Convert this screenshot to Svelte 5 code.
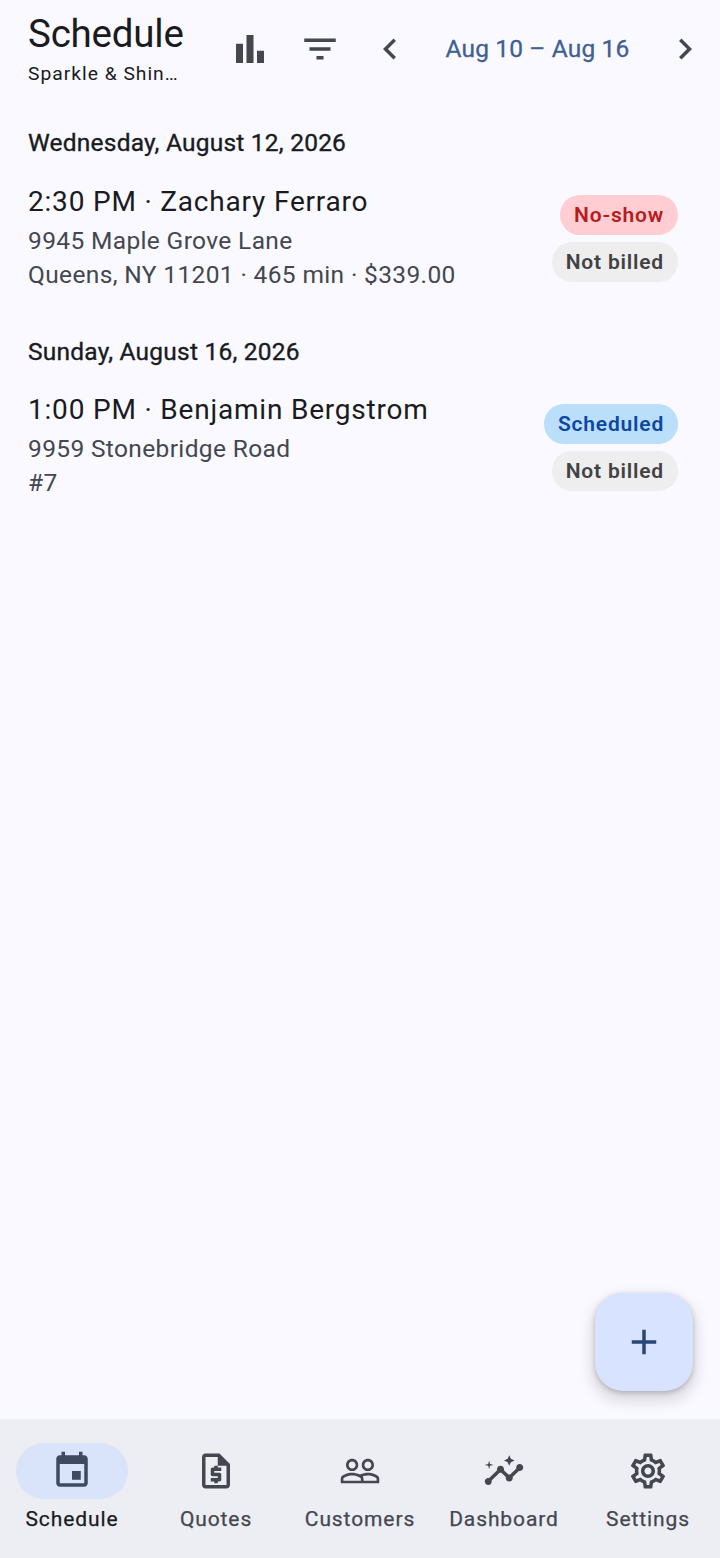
<script>
  const P = {
    bar: 'M4 9h4v11H4zm12 4h4v7h-4zm-6-9h4v16h-4z',
    filter: 'M10 18h4v-2h-4v2zM3 6v2h18V6H3zm3 7h12v-2H6v2z',
    left: 'M15.41 7.41 14 6l-6 6 6 6 1.41-1.41L10.83 12z',
    right: 'M10 6 8.59 7.41 13.17 12l-4.58 4.59L10 18l6-6z',
    add: 'M19 13h-6v6h-2v-6H5v-2h6V5h2v6h6v2z'
  };
  const days = [
    { date: 'Wednesday, August 12, 2026', title: '2:30 PM · Zachary Ferraro', l1: '9945 Maple Grove Lane', l2: 'Queens, NY 11201 · 465 min · $339.00', status: 'No-show', cls: 'red' },
    { date: 'Sunday, August 16, 2026', title: '1:00 PM · Benjamin Bergstrom', l1: '9959 Stonebridge Road', l2: '#7', status: 'Scheduled', cls: 'blue' }
  ];
  const nav = [
    { label: 'Schedule', active: true, d: 'M17 12h-5v5h5v-5zM16 1v2H8V1H6v2H5c-1.11 0-1.99.9-1.99 2L3 19c0 1.1.89 2 2 2h14c1.1 0 2-.9 2-2V5c0-1.1-.9-2-2-2h-1V1h-2zm3 18H5V8h14v11z' },
    { label: 'Quotes', d: 'M14 2H6c-1.1 0-1.99.9-1.99 2L4 20c0 1.1.89 2 1.99 2H18c1.1 0 2-.9 2-2V8l-6-6zm4 18H6V4h7v5h5v11zM11 19h2v-1h1c.55 0 1-.45 1-1v-3c0-.55-.45-1-1-1h-3v-1h4v-2h-2V9h-2v1h-1c-.55 0-1 .45-1 1v3c0 .55.45 1 1 1h3v1H9v2h2v1z' },
    { label: 'Customers', d: 'M16.5 13c-1.2 0-3.07.34-4.5 1-1.43-.67-3.3-1-4.5-1C5.33 13 1 14.08 1 16.25V19h22v-2.75c0-2.17-4.33-3.25-6.5-3.25zm-4 4.5h-10v-1.25c0-.54 2.56-1.75 5-1.75s5 1.21 5 1.75v1.25zm9 0H14v-1.25c0-.46-.2-.86-.52-1.22.88-.3 1.96-.53 3.02-.53 2.44 0 5 1.21 5 1.75v1.25zM7.5 12c1.93 0 3.5-1.57 3.5-3.5S9.43 5 7.5 5 4 6.57 4 8.5 5.57 12 7.5 12zm0-5.5c1.1 0 2 .9 2 2s-.9 2-2 2-2-.9-2-2 .9-2 2-2zm9 5.5c1.93 0 3.5-1.57 3.5-3.5S18.43 5 16.5 5 13 6.57 13 8.5s1.57 3.5 3.5 3.5zm0-5.5c1.1 0 2 .9 2 2s-.9 2-2 2-2-.9-2-2 .9-2 2-2z' },
    { label: 'Dashboard', d: 'M21 8c-1.45 0-2.26 1.44-1.93 2.51l-3.55 3.56c-.3-.09-.74-.09-1.04 0l-2.55-2.55C12.27 10.45 11.46 9 10 9c-1.45 0-2.27 1.44-1.93 2.52l-4.56 4.55C2.44 15.74 1 16.55 1 18c0 1.1.9 2 2 2 1.45 0 2.26-1.44 1.93-2.51l4.55-4.56c.3.09.74.09 1.04 0l2.55 2.55C12.73 16.55 13.54 18 15 18c1.45 0 2.27-1.44 1.93-2.52l3.56-3.55c1.07.33 2.51-.48 2.51-1.93 0-1.1-.9-2-2-2zM15 9l.94-2.07L18 6l-2.06-.93L15 3l-.92 2.07L12 6l2.08.93zM3.5 11 4 9l2-.5L4 8l-.5-2L3 8l-2 .5L3 9z' },
    { label: 'Settings', d: 'M19.43 12.98c.04-.32.07-.64.07-.98 0-.34-.03-.66-.07-.98l2.11-1.65c.19-.15.24-.42.12-.64l-2-3.46c-.09-.16-.26-.25-.44-.25-.06 0-.12.01-.17.03l-2.49 1c-.52-.4-1.08-.73-1.69-.98l-.38-2.65C14.46 2.18 14.25 2 14 2h-4c-.25 0-.46.18-.49.42l-.38 2.65c-.61.25-1.17.59-1.69.98l-2.49-1c-.06-.02-.12-.03-.18-.03-.17 0-.34.09-.43.25l-2 3.46c-.13.22-.07.49.12.64l2.11 1.65c-.04.32-.07.65-.07.98 0 .33.03.66.07.98l-2.11 1.65c-.19.15-.24.42-.12.64l2 3.46c.09.16.26.25.44.25.06 0 .12-.01.17-.03l2.49-1c.52.4 1.08.73 1.69.98l.38 2.65c.03.24.24.42.49.42h4c.25 0 .46-.18.49-.42l.38-2.65c.61-.25 1.17-.59 1.69-.98l2.49 1c.06.02.12.03.18.03.17 0 .34-.09.43-.25l2-3.46c.12-.22.07-.49-.12-.64l-2.11-1.65zm-1.98-1.71c.04.31.05.52.05.73 0 .21-.02.43-.05.73l-.14 1.13.89.7 1.08.84-.7 1.21-1.27-.51-1.04-.42-.9.68c-.43.32-.84.56-1.25.73l-1.06.43-.16 1.13-.2 1.35h-1.4l-.19-1.35-.16-1.13-1.06-.43c-.43-.18-.83-.41-1.23-.71l-.91-.7-1.06.43-1.27.51-.7-1.21 1.08-.84.89-.7-.14-1.13c-.03-.31-.05-.54-.05-.74s.02-.43.05-.73l.14-1.13-.89-.7-1.08-.84.7-1.21 1.27.51 1.04.42.9-.68c.43-.32.84-.56 1.25-.73l1.06-.43.16-1.13.2-1.35h1.39l.19 1.35.16 1.13 1.06.43c.43.18.83.41 1.23.71l.91.7 1.06-.43 1.27-.51.7 1.21-1.07.85-.89.7.14 1.13zM12 8c-2.21 0-4 1.79-4 4s1.79 4 4 4 4-1.79 4-4-1.79-4-4-4zm0 6c-1.1 0-2-.9-2-2s.9-2 2-2 2 .9 2 2-.9 2-2 2z' }
  ];
</script>

<div class="page">
  <header class="bar">
    <div class="heading">
      <div class="title">Schedule</div>
      <div class="sub">Sparkle &amp; Shin…</div>
    </div>
    <div class="btn"><svg viewBox="0 0 24 24"><path d={P.bar} /></svg></div>
    <div class="btn"><svg viewBox="0 0 24 24"><path d={P.filter} /></svg></div>
    <div class="btn"><svg viewBox="0 0 24 24"><path d={P.left} /></svg></div>
    <div class="range">Aug 10 – Aug 16</div>
    <div class="btn"><svg viewBox="0 0 24 24"><path d={P.right} /></svg></div>
  </header>

  <main class="list">
    {#each days as day}
      <section class="day">
        <h2>{day.date}</h2>
        <div class="job">
          <div class="info">
            <div class="job-title">{day.title}</div>
            <div class="line">{day.l1}</div>
            <div class="line">{day.l2}</div>
          </div>
          <div class="chips">
            <span class="chip {day.cls}">{day.status}</span>
            <span class="chip grey">Not billed</span>
          </div>
        </div>
      </section>
    {/each}
  </main>

  <div class="fab"><svg viewBox="0 0 24 24"><path d={P.add} /></svg></div>

  <nav class="nav">
    {#each nav as item}
      <div class="tab" class:active={item.active}>
        <div class="pill"><svg viewBox="0 0 24 24"><path d={item.d} /></svg></div>
        <div class="label">{item.label}</div>
      </div>
    {/each}
  </nav>
</div>

<style>
  :global(body) { margin: 0; background: #f9f9ff; }
  .page {
    position: relative;
    height: 1558px;
    display: flex;
    flex-direction: column;
    background: #f9f9ff;
    font-family: Roboto, sans-serif;
    color: #1a1b20;
    overflow: hidden;
  }
  .bar { display: flex; align-items: center; height: 98px; flex: none; }
  .heading { flex: 1; min-width: 0; padding-left: 28px; margin-top: -3px; }
  .title { font-size: 38.5px; line-height: 48px; letter-spacing: -0.2px; }
  .sub { font-size: 19.25px; line-height: 24px; letter-spacing: 1px; margin-top: 4px; }
  .btn { width: 70px; height: 70px; display: flex; align-items: center; justify-content: center; flex: none; }
  .btn svg { width: 42px; height: 42px; fill: #44474f; }
  .range { width: 225px; padding-bottom: 2px; text-align: center; font-size: 24.5px; font-weight: 400; -webkit-text-stroke: 0.3px currentColor; color: #415f91; letter-spacing: 0.15px; flex: none; }
  .list { flex: 1; min-height: 0; }
  .day { padding: 28px 42px 15px 28px; }
  h2 { margin: 0 0 22.5px; font-size: 24.5px; line-height: 34px; font-weight: 400; -webkit-text-stroke: 0.35px currentColor; letter-spacing: 0.22px; }
  .job { display: flex; justify-content: space-between; align-items: flex-start; }
  .job-title { font-size: 28px; line-height: 38px; letter-spacing: 0.8px; margin-bottom: 3px; }
  .line { font-size: 24.5px; line-height: 34px; letter-spacing: 0.36px; color: #44474f; }
  .chips { display: flex; flex-direction: column; align-items: flex-end; gap: 7px; padding-top: 12.5px; }
  .chip { height: 40px; line-height: 41px; padding: 0 14px; border-radius: 20px; font-size: 21px; font-weight: 600; letter-spacing: 0.8px; }
  .red { background: #ffcdd2; color: #b71c1c; }
  .blue { background: #bbdefb; color: #0d47a1; }
  .grey { background: #eeeeee; color: #424242; }
  .fab {
    position: absolute;
    right: 27px;
    bottom: 167px;
    width: 98px;
    height: 98px;
    border-radius: 28px;
    background: #d8e3ff;
    display: flex;
    align-items: center;
    justify-content: center;
    box-shadow: 0 7px 14px 4px rgba(0,0,0,0.12), 0 2px 5px rgba(0,0,0,0.2);
  }
  .fab svg { width: 42px; height: 42px; fill: #284777; }
  .nav { display: flex; height: 139px; flex: none; background: #ededf4; }
  .tab { flex: 1; display: flex; flex-direction: column; align-items: center; padding-top: 24px; color: #44474f; }
  .pill { width: 112px; height: 56px; border-radius: 28px; display: flex; align-items: center; justify-content: center; }
  .active .pill { background: #d9e3f9; }
  .pill svg { width: 42px; height: 42px; fill: #44474f; }
  .active .pill svg { fill: #3f4a60; }
  .label { font-size: 21px; line-height: 28px; font-weight: 400; -webkit-text-stroke: 0.25px currentColor; letter-spacing: 0.9px; margin-top: 6px; }
  .active .label { color: #1a1b20; }
</style>
